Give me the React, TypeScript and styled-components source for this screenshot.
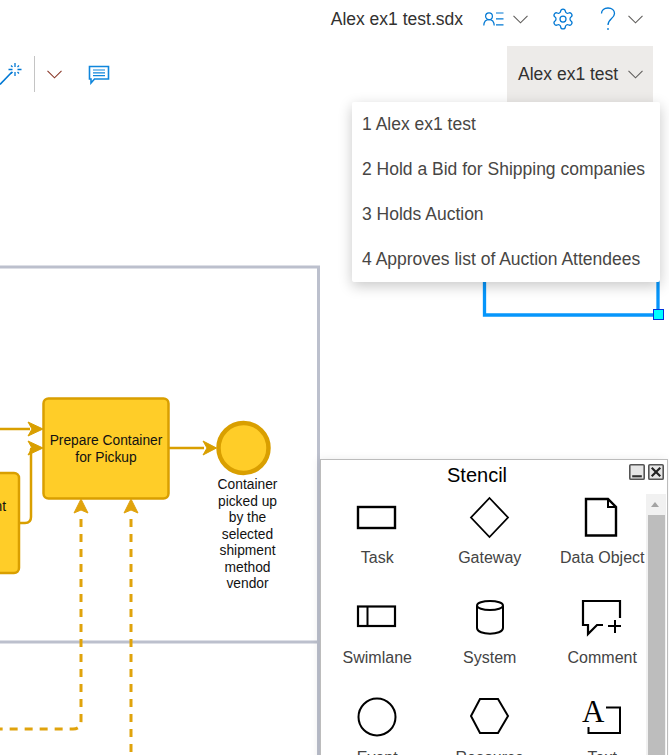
// App.tsx
import React from "react";
import styled, { createGlobalStyle } from "styled-components";
import { Settings } from "lucide-react";

const GlobalStyle = createGlobalStyle`
  html, body {
    margin: 0;
    padding: 0;
    background: #fff;
    font-family: "Liberation Sans", Arial, sans-serif;
  }
`;

const Page = styled.div`
  position: relative;
  display: flex;
  flex-direction: column;
  width: 669px;
  height: 755px;
  overflow: hidden;
  background: #fff;
`;

const Header = styled.header`
  display: flex;
  align-items: center;
  justify-content: flex-end;
  height: 46px;
  padding-right: 26px;
  padding-bottom: 8px;
  box-sizing: border-box;
  flex-shrink: 0;
`;

const FileName = styled.span`
  font-size: 17.5px;
  color: #323130;
`;

const Cluster = styled.div<{ $ml: number; $gap?: number }>`
  display: flex;
  align-items: center;
  margin-left: ${(p) => p.$ml}px;
  gap: ${(p) => p.$gap ?? 0}px;

  svg {
    display: block;
  }
`;

const ToolRow = styled.div`
  display: flex;
  align-items: center;
  justify-content: space-between;
  height: 56px;
  padding-right: 16px;
  flex-shrink: 0;
`;

const Tools = styled.div`
  display: flex;
  align-items: center;

  svg {
    display: block;
  }
`;

const Divider = styled.div`
  width: 1px;
  height: 36px;
  margin: 0 12px 0 11px;
  background: #c4c4c4;
`;

const CommentIcon = styled.svg`
  margin: 2px 0 0 26px;
`;

const PickerWrap = styled.div`
  position: relative;
`;

const Picker = styled.button`
  display: flex;
  align-items: center;
  gap: 10px;
  width: 146px;
  height: 56px;
  padding: 0 0 0 11px;
  border: none;
  background: #edebe9;
  font-family: inherit;
  font-size: 17.5px;
  color: #323130;
`;

const Menu = styled.ul`
  position: absolute;
  top: 56px;
  right: -7px;
  z-index: 5;
  width: 308px;
  margin: 0;
  padding: 0;
  list-style: none;
  background: #fff;
  border-radius: 2px;
  box-shadow: 0 4px 14px rgba(0, 0, 0, 0.22);
`;

const MenuItem = styled.li`
  display: flex;
  align-items: center;
  height: 45px;
  padding-left: 10px;
  font-size: 17.5px;
  color: #484644;
  white-space: nowrap;
`;

const Canvas = styled.main`
  position: relative;
  flex: 1;
  min-height: 0;
`;

const Diagram = styled.svg`
  display: block;
  width: 669px;
  height: 653px;
`;

const Stencil = styled.aside`
  position: absolute;
  top: 357px;
  left: 320px;
  width: 348px;
  height: 420px;
  box-sizing: border-box;
  background: #fff;
  border: 1px solid #bcbcbc;
  box-shadow: -2px 0 8px rgba(0, 0, 0, 0.08);
`;

const StencilTitle = styled.div`
  position: relative;
  display: flex;
  align-items: center;
  justify-content: center;
  height: 34px;
  padding-right: 34px;
  padding-bottom: 4px;
  box-sizing: border-box;
  font-size: 20px;
  color: #000;
`;

const WindowButtons = styled.div`
  position: absolute;
  top: 4px;
  right: 3px;
  display: flex;
  gap: 3px;
`;

const WindowButton = styled.svg`
  display: block;
  width: 16px;
  height: 16px;
`;

const StencilBody = styled.div`
  display: flex;
  align-items: flex-start;
`;

const ShapeGrid = styled.div`
  display: grid;
  grid-template-columns: repeat(3, 112.5px);
  grid-auto-rows: 100px;
  width: 325px;
  flex-shrink: 0;
  padding-top: 1px;
`;

const ShapeCell = styled.div`
  display: flex;
  flex-direction: column;
  align-items: center;
`;

const ShapeIcon = styled.svg`
  display: block;
  width: 44px;
  height: 44px;
  fill: none;
  stroke: #000;
  stroke-width: 2;
`;

const ShapeLabel = styled.span`
  margin-top: 9px;
  font-size: 16px;
  line-height: 20px;
  color: #444;
  white-space: nowrap;
`;

const Scrollbar = styled.div`
  position: relative;
  width: 20px;
  height: 300px;
  background: #f1f1f1;
`;

const ScrollArrow = styled.div`
  position: absolute;
  top: 8px;
  left: 5px;
  border-left: 4.5px solid transparent;
  border-right: 4.5px solid transparent;
  border-bottom: 5px solid #a3a3a3;
`;

const ScrollThumb = styled.div`
  position: absolute;
  top: 21px;
  left: 2px;
  width: 17px;
  height: 280px;
  background: #bdbdbd;
`;

const Chevron = ({ color = "#605e5c", width = 15 }: { color?: string; width?: number }) => (
  <svg width={width} height={9} viewBox="0 0 15 9" fill="none" stroke={color} strokeWidth={1.1}>
    <path d="M0.5 0.8 L7.5 7.8 L14.5 0.8" />
  </svg>
);

const shapes: { label: string; icon: React.ReactNode }[] = [
  { label: "Task", icon: <rect x="3" y="12" width="37" height="21" strokeWidth="2.4" /> },
  { label: "Gateway", icon: <path d="M21.5 3 L40 22.5 L21.5 42 L3 22.5 Z" strokeWidth="1.8" /> },
  {
    label: "Data Object",
    icon: (
      <>
        <path d="M6 40.5 V4 H28 L36 12 V40.5 Z" strokeWidth="2.4" />
        <path d="M28 4 V12 H36" />
      </>
    ),
  },
  {
    label: "Swimlane",
    icon: (
      <>
        <rect x="3" y="11.5" width="37" height="19.5" strokeWidth="2.2" />
        <path d="M12.5 11.5 V31" />
      </>
    ),
  },
  {
    label: "System",
    icon: (
      <>
        <path d="M9 11 V33 C9 40.5 35 40.5 35 33 V11" />
        <ellipse cx="22" cy="10.5" rx="13" ry="4.5" />
      </>
    ),
  },
  {
    label: "Comment",
    icon: (
      <>
        <path d="M40 23 V6 H3 V30 H8 V39 L17 30 H23" strokeWidth="2.2" />
        <path d="M35 25 V38 M28 31 H41" />
      </>
    ),
  },
  { label: "Event", icon: <circle cx="22" cy="22" r="18.5" /> },
  { label: "Resource", icon: <path d="M12 4 H30 L40 21 L30 38 H12 L3 21 Z" /> },
  {
    label: "Text",
    icon: (
      <>
        <text
          x="2"
          y="27"
          fontFamily="'Liberation Serif', serif"
          fontSize="31"
          fill="#000"
          stroke="none"
        >
          A
        </text>
        <path d="M26 12.5 H40 V38 H8.5 V32" />
      </>
    ),
  },
];

const gold = "#d99f00";
const dash = "#e0a30c";

export default function App() {
  return (
    <Page>
      <GlobalStyle />
      <Header>
        <FileName>Alex ex1 test.sdx</FileName>
        <Cluster $ml={20} $gap={9}>
          <svg width="21" height="14" viewBox="0 0 21 14" fill="none" stroke="#0078d4" strokeWidth="1.2">
            <circle cx="6" cy="4.2" r="3.4" />
            <path d="M0.8 13.5 C1 9 3 7.6 6 7.6 C9 7.6 11 9 11.2 13.5" />
            <path d="M13 1 H20.5 M13 6.8 H20.5 M13 12.8 H20.5" />
          </svg>
          <Chevron />
        </Cluster>
        <Cluster $ml={23}>
          <Settings size={24} color="#0078d4" strokeWidth={1.25} />
        </Cluster>
        <Cluster $ml={25} $gap={12}>
          <svg width="16" height="24" viewBox="0 0 16 24" fill="none" stroke="#0078d4" strokeWidth="1.3">
            <path d="M1.5 6.5 C1.5 3 4.2 1 8 1 C11.8 1 14.5 3.2 14.5 6.4 C14.5 11.5 8 11.5 8 18" />
            <path d="M8 21 V23" />
          </svg>
          <Chevron />
        </Cluster>
      </Header>
      <ToolRow>
        <Tools>
          <svg width="23" height="24" viewBox="0 0 23 24" fill="none" stroke="#0078d4" strokeWidth="1.3">
            <path d="M0 22.5 L12 10" strokeWidth="1.6" />
            <path d="M15 1 V5 M15 10 V14 M8.5 7.5 H12.5 M17.5 7.5 H21.5 M11 3.5 L12.5 5 M19 3.5 L17.5 5 M11 11.5 L12.5 10 M19 11.5 L17.5 10" />
          </svg>
          <Divider />
          <Chevron color="#8b3a2b" />
          <CommentIcon width="22" height="20" viewBox="0 0 22 20" fill="none" stroke="#0f86dc" strokeWidth="1.6">
            <path d="M1.5 1.5 H20.5 V14 H6.5 L3 18 V14 H1.5 Z" />
            <path d="M5 5 H17 M5 7.8 H17 M5 10.6 H17" strokeWidth="1.2" />
          </CommentIcon>
        </Tools>
        <PickerWrap>
          <Picker>
            Alex ex1 test
            <Chevron />
          </Picker>
          <Menu>
            <MenuItem>1 Alex ex1 test</MenuItem>
            <MenuItem>2 Hold a Bid for Shipping companies</MenuItem>
            <MenuItem>3 Holds Auction</MenuItem>
            <MenuItem>4 Approves list of Auction Attendees</MenuItem>
          </Menu>
        </PickerWrap>
      </ToolRow>
      <Canvas>
        <Diagram viewBox="0 102 669 653">
          {/* selected shape */}
          <path d="M484.5 270 V315 H658 V270" fill="none" stroke="#0696fb" strokeWidth="3.3" />
          <rect x="653.5" y="309.5" width="10" height="10" fill="#00ffff" stroke="#0033dd" />

          {/* pool */}
          <path d="M0 267 H318.5 V755 M0 642 H318.5" fill="none" stroke="#bcc0cd" strokeWidth="3" />

          {/* flows */}
          <path d="M0 429 H30 M19 523 H25 Q31 523 31 517 V449 H30 M169 448 H204" fill="none" stroke={gold} strokeWidth="2.5" />
          <path d="M43 429 L28 422 L32 429 L28 436 Z M43 448 L28 441 L32 448 L28 455 Z M216.5 448 L203 441 L207 448 L203 455 Z" fill={gold} stroke={gold} />

          {/* left task, cut by the window edge */}
          <rect x="-40" y="473" width="59" height="100" rx="5" fill="#ffcd28" stroke={gold} strokeWidth="2.5" />
          <text x="6" y="511" textAnchor="end" fontFamily="'Liberation Sans', sans-serif" fontSize="13.8" fill="#111">nt</text>

          <rect x="43.5" y="398.5" width="125" height="100" rx="5" fill="#ffcd28" stroke={gold} strokeWidth="2.5" />
          <text textAnchor="middle" fontFamily="'Liberation Sans', sans-serif" fontSize="13.8" fill="#111">
            <tspan x="106" y="445">Prepare Container</tspan>
            <tspan x="106" y="462">for Pickup</tspan>
          </text>

          <circle cx="243.5" cy="448" r="25" fill="#ffcd28" stroke={gold} strokeWidth="4.5" />
          <text textAnchor="middle" fontFamily="'Liberation Sans', sans-serif" fontSize="13.8" fill="#111">
            <tspan x="247.5" y="489">Container</tspan>
            <tspan x="247.5" y="506">picked up</tspan>
            <tspan x="247.5" y="522">by the</tspan>
            <tspan x="247.5" y="539">selected</tspan>
            <tspan x="247.5" y="555">shipment</tspan>
            <tspan x="247.5" y="572">method</tspan>
            <tspan x="247.5" y="588">vendor</tspan>
          </text>

          {/* message flows */}
          <path d="M81 519 V721 Q81 729 73 729 H0" fill="none" stroke={dash} strokeWidth="3" strokeDasharray="8 7" />
          <path d="M131 519 V755" fill="none" stroke={dash} strokeWidth="3" strokeDasharray="8 7" />
          <path d="M81 499 L74 513 L81 510 L88 513 Z M131 499 L124 513 L131 510 L138 513 Z" fill={dash} stroke={dash} />
        </Diagram>

        <Stencil>
          <StencilTitle>
            Stencil
            <WindowButtons>
              <WindowButton viewBox="0 0 15 15">
                <rect x="0.75" y="0.75" width="13.5" height="13.5" rx="1" fill="#e6e6e6" stroke="#555" strokeWidth="1.5" />
                <path d="M3 11.5 H12" stroke="#333" strokeWidth="2" />
              </WindowButton>
              <WindowButton viewBox="0 0 15 15">
                <rect x="0.75" y="0.75" width="13.5" height="13.5" rx="1" fill="#e6e6e6" stroke="#555" strokeWidth="1.5" />
                <path d="M3.5 3.5 L11.5 11.5 M11.5 3.5 L3.5 11.5" stroke="#222" strokeWidth="2" />
              </WindowButton>
            </WindowButtons>
          </StencilTitle>
          <StencilBody>
            <ShapeGrid>
              {shapes.map((s) => (
                <ShapeCell key={s.label}>
                  <ShapeIcon viewBox="0 0 44 44">{s.icon}</ShapeIcon>
                  <ShapeLabel>{s.label}</ShapeLabel>
                </ShapeCell>
              ))}
            </ShapeGrid>
            <Scrollbar>
              <ScrollArrow />
              <ScrollThumb />
            </Scrollbar>
          </StencilBody>
        </Stencil>
      </Canvas>
    </Page>
  );
}
